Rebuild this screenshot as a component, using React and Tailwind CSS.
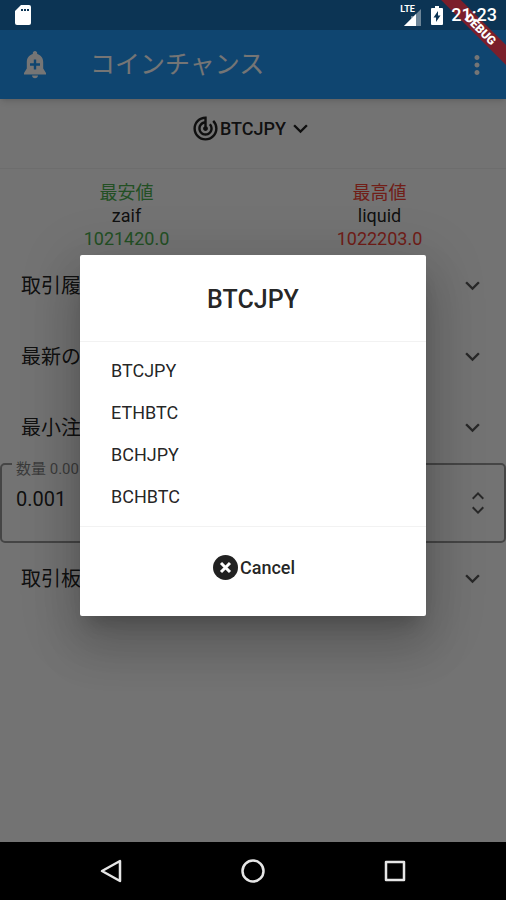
import { MdExpandLess, MdExpandMore, MdMoreVert, MdTrackChanges } from 'react-icons/md';

const pairs = ['BTCJPY', 'ETHBTC', 'BCHJPY', 'BCHBTC'];

function StatusBar() {
  return (
    <div className="relative z-20 flex h-[30px] items-center justify-between bg-[#0c3454] pl-[14px] pr-[9px] text-white">
      {/* Debug ribbon */}
      <div className="absolute right-0 top-0 h-[72px] w-[72px] overflow-hidden">
        <div className="absolute -right-9 top-[21px] h-[14px] w-[126px] rotate-45 bg-[#7b1f2b] pl-1 text-center text-xs font-black leading-[14px]">
          DEBUG
        </div>
      </div>

      {/* SD card */}
      <svg className="relative h-5 w-[18px]" viewBox="0 0 18 20" aria-hidden="true">
        <path d="M7 0h8a2 2 0 0 1 2 2v16a2 2 0 0 1-2 2H3a2 2 0 0 1-2-2V6z" fill="#fff" />
        <path d="M7 4h2v2H7zM10 4h2v2h-2zM13 4h2v2h-2z" fill="#0c3454" />
      </svg>

      <div className="relative flex items-center">
        <div className="relative mr-[10px] mt-1">
          <span className="absolute -left-1 -top-1 text-[9px] font-bold leading-[9px]">LTE</span>
          <svg className="h-[17px] w-[17px]" viewBox="0 0 17 17" aria-hidden="true">
            <path d="M17 0v17H0L7 10V7h3z" fill="#fff" fillOpacity="0.4" />
            <path d="M0 17L12 5v12z" fill="#fff" />
          </svg>
        </div>
        <svg className="mr-2 h-[19px] w-3" viewBox="0 0 12 19" aria-hidden="true">
          <path d="M4 0h4v2h3a1 1 0 0 1 1 1v15a1 1 0 0 1-1 1H1a1 1 0 0 1-1-1V3a1 1 0 0 1 1-1h3z" fill="#fff" />
          <path d="M7 5v4.500h2.500L5 16v-4.500H2.500z" fill="#0c3454" />
        </svg>
        <span className="text-lg font-medium leading-[22px]">21:23</span>
      </div>
    </div>
  );
}

function AddAlertIcon() {
  return (
    <svg className="h-[30px] w-[30px]" viewBox="0 0 30 30" aria-hidden="true">
      <path
        fill="currentColor"
        fillRule="evenodd"
        d="M15 1c-1.300 0-2.200 1-2.200 2.200v.9C9 5.100 6.800 8.300 6.800 12.300v6.200L4 23v1.500h22V23l-2.800-4.500v-6.200c0-4-2.200-7.200-6-8.200v-.9C17.200 2 16.300 1 15 1zM13.800 9.500h2.400v3.800H20v2.400h-3.800v3.800h-2.400v-3.800H10v-2.400h3.800z"
      />
      <path fill="currentColor" d="M12 25.500h6c0 1.600-1.300 2.800-3 2.800s-3-1.200-3-2.800z" />
    </svg>
  );
}

function AppBar() {
  return (
    <header className="relative flex h-[69px] items-center bg-[#2196f3] px-5 text-white shadow-md">
      <button type="button" aria-label="Add alert">
        <AddAlertIcon />
      </button>
      <h1 className="ml-10 flex-1 text-[25px] font-normal leading-8">コインチャンス</h1>
      <button type="button" aria-label="More" className="-mr-1.5">
        <MdMoreVert className="h-[30px] w-[30px]" />
      </button>
    </header>
  );
}

function Price({ label, exchange, value, color }) {
  return (
    <div className="text-center text-lg leading-[23px]">
      <p className={color}>{label}</p>
      <p>{exchange}</p>
      <p className={color}>{value}</p>
    </div>
  );
}

function Panel({ title }) {
  return (
    <button type="button" className="flex h-[71px] w-full items-center justify-between pl-[21px] pr-[19px] text-xl">
      {title}
      <MdExpandMore className="h-[29px] w-[29px] text-black/65" />
    </button>
  );
}

function AmountField() {
  return (
    <fieldset className="h-20 rounded-[5px] border-2 border-black/40 px-3.5">
      <legend className="-ml-1 h-0 px-1 text-[15px] leading-[10px] text-black/50">
        <label htmlFor="amount">数量 0.001</label>
      </legend>
      <div className="flex h-full items-center">
        <input
          id="amount"
          type="text"
          defaultValue="0.001"
          className="mb-2 min-w-0 flex-1 bg-transparent text-xl outline-none"
        />
        <div className="flex flex-col text-black/65">
          <button type="button" aria-label="Increase" className="flex h-3.5 items-center">
            <MdExpandLess className="h-6 w-6" />
          </button>
          <button type="button" aria-label="Decrease" className="flex h-3.5 items-center">
            <MdExpandMore className="h-6 w-6" />
          </button>
        </div>
      </div>
    </fieldset>
  );
}

function CancelIcon() {
  return (
    <svg className="h-[29px] w-[29px]" viewBox="0 0 29 29" aria-hidden="true">
      <circle cx="14.500" cy="14.500" r="12.500" fill="currentColor" />
      <path d="M10 10l9 9M19 10l-9 9" stroke="#fff" strokeWidth="3" />
    </svg>
  );
}

function PairDialog() {
  return (
    <div className="absolute inset-0 flex items-center justify-center bg-black/54 px-20 pb-0.5">
      <div
        role="dialog"
        aria-modal="true"
        aria-labelledby="dialog-title"
        className="w-full rounded-[2px] bg-white shadow-[0_14px_18px_-9px_rgba(0,0,0,0.2),0_30px_46px_4px_rgba(0,0,0,0.14),0_11px_56px_10px_rgba(0,0,0,0.12)]"
      >
        <h2 id="dialog-title" className="pb-[26px] pt-[30px] text-center text-[25px] font-medium leading-[30px]">
          BTCJPY
        </h2>
        <ul className="border-y border-[#f2f2f2] py-2">
          {pairs.map((pair) => (
            <li key={pair}>
              <button type="button" className="block h-[42px] w-full pl-[31px] text-left text-lg text-black/87">
                {pair}
              </button>
            </li>
          ))}
        </ul>
        <div className="flex justify-center pb-[34px] pt-[26px]">
          <button type="button" className="flex items-center text-lg font-medium leading-[29px]">
            <CancelIcon />
            Cancel
          </button>
        </div>
      </div>
    </div>
  );
}

function NavigationBar() {
  return (
    <nav className="grid h-[58px] grid-cols-3 items-center justify-items-center bg-black px-10">
      <button type="button" aria-label="Back">
        <svg className="h-6 w-6" viewBox="0 0 24 24" fill="none" stroke="#e6e6e6" strokeWidth="2.5" strokeLinejoin="round">
          <path d="M21 2v20L3 12z" />
        </svg>
      </button>
      <button type="button" aria-label="Home">
        <svg className="h-6 w-6" viewBox="0 0 24 24" fill="none" stroke="#e6e6e6" strokeWidth="2.5">
          <circle cx="12" cy="12" r="10.5" />
        </svg>
      </button>
      <button type="button" aria-label="Overview">
        <svg className="h-6 w-6" viewBox="0 0 24 24" fill="none" stroke="#e6e6e6" strokeWidth="2.5" strokeLinejoin="round">
          <path d="M3 3h18v18H3z" />
        </svg>
      </button>
    </nav>
  );
}

export default function App() {
  return (
    <div className="flex min-h-screen flex-col font-['Roboto','Noto_Sans_CJK_JP',sans-serif] text-black/87">
      <StatusBar />
      <div className="relative flex-1 bg-[#fafafa]">
        <AppBar />
        <main>
          <div className="flex h-[70px] justify-center border-b border-black/5 pt-[15px]">
            <button type="button" aria-haspopup="dialog" className="flex h-[29px] items-center text-lg font-medium">
              <MdTrackChanges className="h-[29px] w-[29px]" />
              BTCJPY
              <MdExpandMore className="h-[29px] w-[29px]" />
            </button>
          </div>
          <div className="grid grid-cols-2 pt-3">
            <Price label="最安値" exchange="zaif" value="1021420.0" color="text-[#4caf50]" />
            <Price label="最高値" exchange="liquid" value="1022203.0" color="text-[#f44336]" />
          </div>
          <Panel title="取引履歴" />
          <Panel title="最新の価格" />
          <Panel title="最小注文数" />
          <AmountField />
          <Panel title="取引板" />
        </main>
        <PairDialog />
      </div>
      <NavigationBar />
    </div>
  );
}
